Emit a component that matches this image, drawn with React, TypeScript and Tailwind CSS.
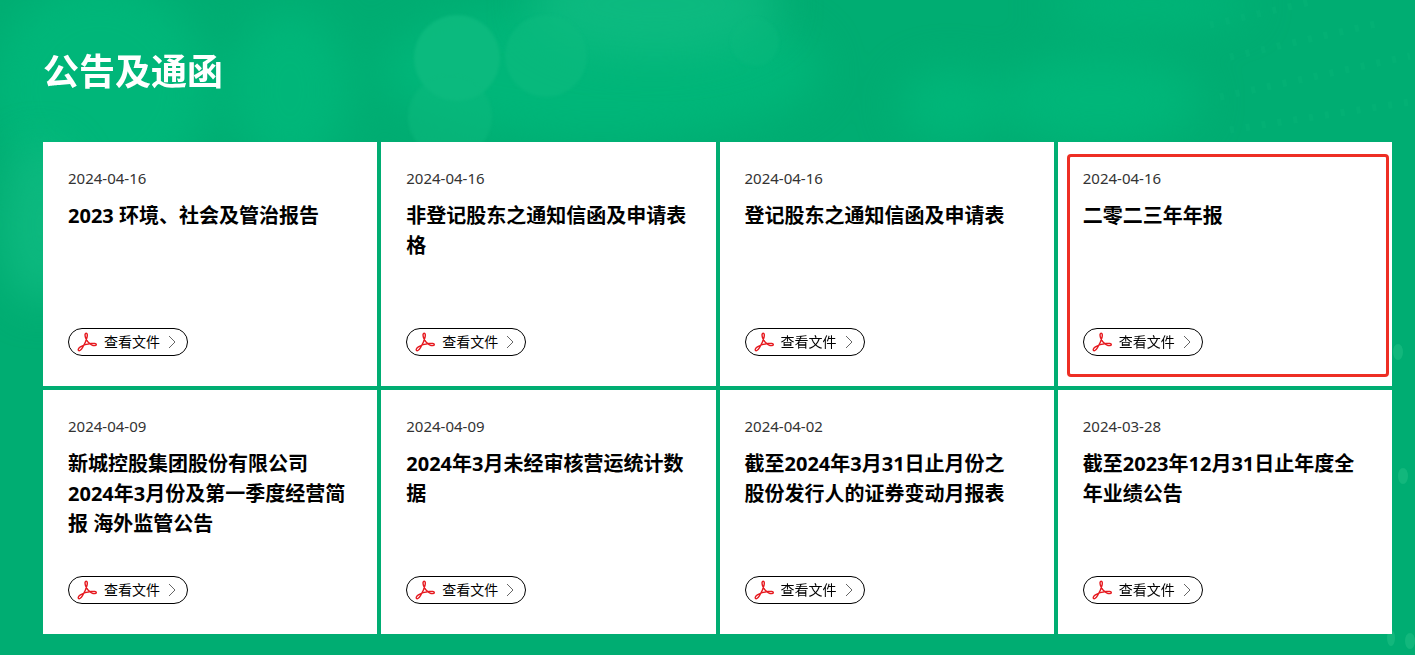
type Notice = { date: string; title: string; marked?: boolean };

const notices: Notice[] = [
  { date: '2024-04-16', title: '2023 环境、社会及管治报告' },
  { date: '2024-04-16', title: '非登记股东之通知信函及申请表格' },
  { date: '2024-04-16', title: '登记股东之通知信函及申请表' },
  { date: '2024-04-16', title: '二零二三年年报', marked: true },
  { date: '2024-04-09', title: '新城控股集团股份有限公司\n2024年3月份及第一季度经营简报 海外监管公告' },
  { date: '2024-04-09', title: '2024年3月未经审核营运统计数据' },
  { date: '2024-04-02', title: '截至2024年3月31日止月份之\n股份发行人的证券变动月报表' },
  { date: '2024-03-28', title: '截至2023年12月31日止年度全\n年业绩公告' },
];

function PdfIcon() {
  return (
    <svg viewBox="0 0 20 20" className="h-5 w-5 shrink-0" fill="none" stroke="#e6191f" strokeWidth="1.4" strokeLinejoin="round" aria-hidden="true">
      <path d="M9.2 1.2C7.9 1.2 7.8 3.2 8.4 5.2C9.3 8 11.8 11.2 14.6 12.9C16.5 13.9 19.2 14 19.3 12.7C19.4 11.4 16.8 11.2 14 11.5C10 11.9 6.2 13 3.4 14.8C1.6 16 .8 17.7 1.5 18.5C2.3 19.2 4 18 5.5 15.6C7.5 12.4 9.4 8.3 10.1 5C10.5 2.9 10.4 1.2 9.2 1.2Z" />
    </svg>
  );
}

function Chevron() {
  return (
    <svg viewBox="0 0 8 14" className="h-3.5 w-2 shrink-0" fill="none" stroke="#666666" strokeWidth="1" aria-hidden="true">
      <path d="M1 1L7 7L1 13" />
    </svg>
  );
}

function Backdrop() {
  return (
    <svg className="absolute inset-0 h-full w-full" viewBox="0 0 1415 655" preserveAspectRatio="xMidYMin slice" aria-hidden="true">
      <defs>
        <filter id="soft" x="-50%" y="-50%" width="200%" height="200%" colorInterpolationFilters="sRGB">
          <feGaussianBlur stdDeviation="20" />
        </filter>
        <filter id="edge" x="-20%" y="-20%" width="140%" height="140%" colorInterpolationFilters="sRGB">
          <feGaussianBlur stdDeviation="1.5" />
        </filter>
      </defs>
      <g filter="url(#soft)" fill="#00b679">
        <ellipse cx="100" cy="90" rx="110" ry="110" />
        <ellipse cx="290" cy="90" rx="60" ry="80" />
        <ellipse cx="600" cy="70" rx="220" ry="70" />
        <ellipse cx="950" cy="105" rx="50" ry="35" />
        <ellipse cx="1100" cy="100" rx="100" ry="45" />
        <ellipse cx="1150" cy="5" rx="100" ry="20" />
      </g>
      <g filter="url(#soft)" fill="#0fbc82">
        <ellipse cx="655" cy="5" rx="125" ry="50" opacity=".8" />
        <ellipse cx="40" cy="225" rx="40" ry="80" opacity=".8" />
      </g>
      <g filter="url(#edge)" fill="#0cba7e">
        <circle cx="457" cy="58" r="43" opacity=".9" />
        <circle cx="546" cy="56" r="41" opacity=".6" />
        <circle cx="450" cy="117" r="42" opacity=".5" />
        <circle cx="755" cy="42" r="24" opacity=".35" />
      </g>
      <g fill="#12b77c">
        <ellipse cx="1398" cy="352" rx="5" ry="8" />
        <ellipse cx="1403" cy="476" rx="5" ry="8" />
        <ellipse cx="1391" cy="638" rx="4" ry="8" />
        <ellipse cx="1410" cy="641" rx="5" ry="8" />
      </g>
      <g stroke="#08b579" strokeWidth="7" strokeDasharray="4 12" fill="none" opacity=".4">
        <path d="M1210 25L1310 2" />
        <path d="M1230 57L1380 23" />
        <path d="M1220 97L1410 56" />
        <path d="M1230 130L1410 102" />
      </g>
    </svg>
  );
}

function NoticeCard({ date, title, marked }: Notice) {
  return (
    <li className="relative flex min-h-[244px] flex-col items-start bg-white px-[25px] pt-6 pb-[30px]">
      <time dateTime={date} className="text-[15px] leading-6 text-[#333333]">{date}</time>
      <h2 className="mt-[11px] mb-4 text-xl leading-[30px] font-bold whitespace-pre-line text-black">{title}</h2>
      <a href="#" className="mt-auto flex h-7 w-[120px] items-center rounded-full border border-black pl-2 text-sm text-black">
        <PdfIcon />
        <span className="ml-[7px] mr-2">查看文件</span>
        <Chevron />
      </a>
      {marked && <div className="pointer-events-none absolute top-3 right-[3px] bottom-[9px] left-[9px] rounded-sm border-3 border-[#ee2e24]" />}
    </li>
  );
}

export default function App() {
  return (
    <main className="relative min-h-screen overflow-hidden bg-[#00ad72] pt-12 pr-[23px] pb-[21px] pl-[43px] font-['Noto_Sans','Noto_Sans_CJK_SC',sans-serif]">
      <Backdrop />
      <div className="relative">
        <h1 className="text-4xl leading-[48px] font-bold text-white">公告及通函</h1>
        <ul className="mt-[46px] grid grid-cols-4 gap-1">
          {notices.map((notice) => (
            <NoticeCard key={notice.title} {...notice} />
          ))}
        </ul>
      </div>
    </main>
  );
}
